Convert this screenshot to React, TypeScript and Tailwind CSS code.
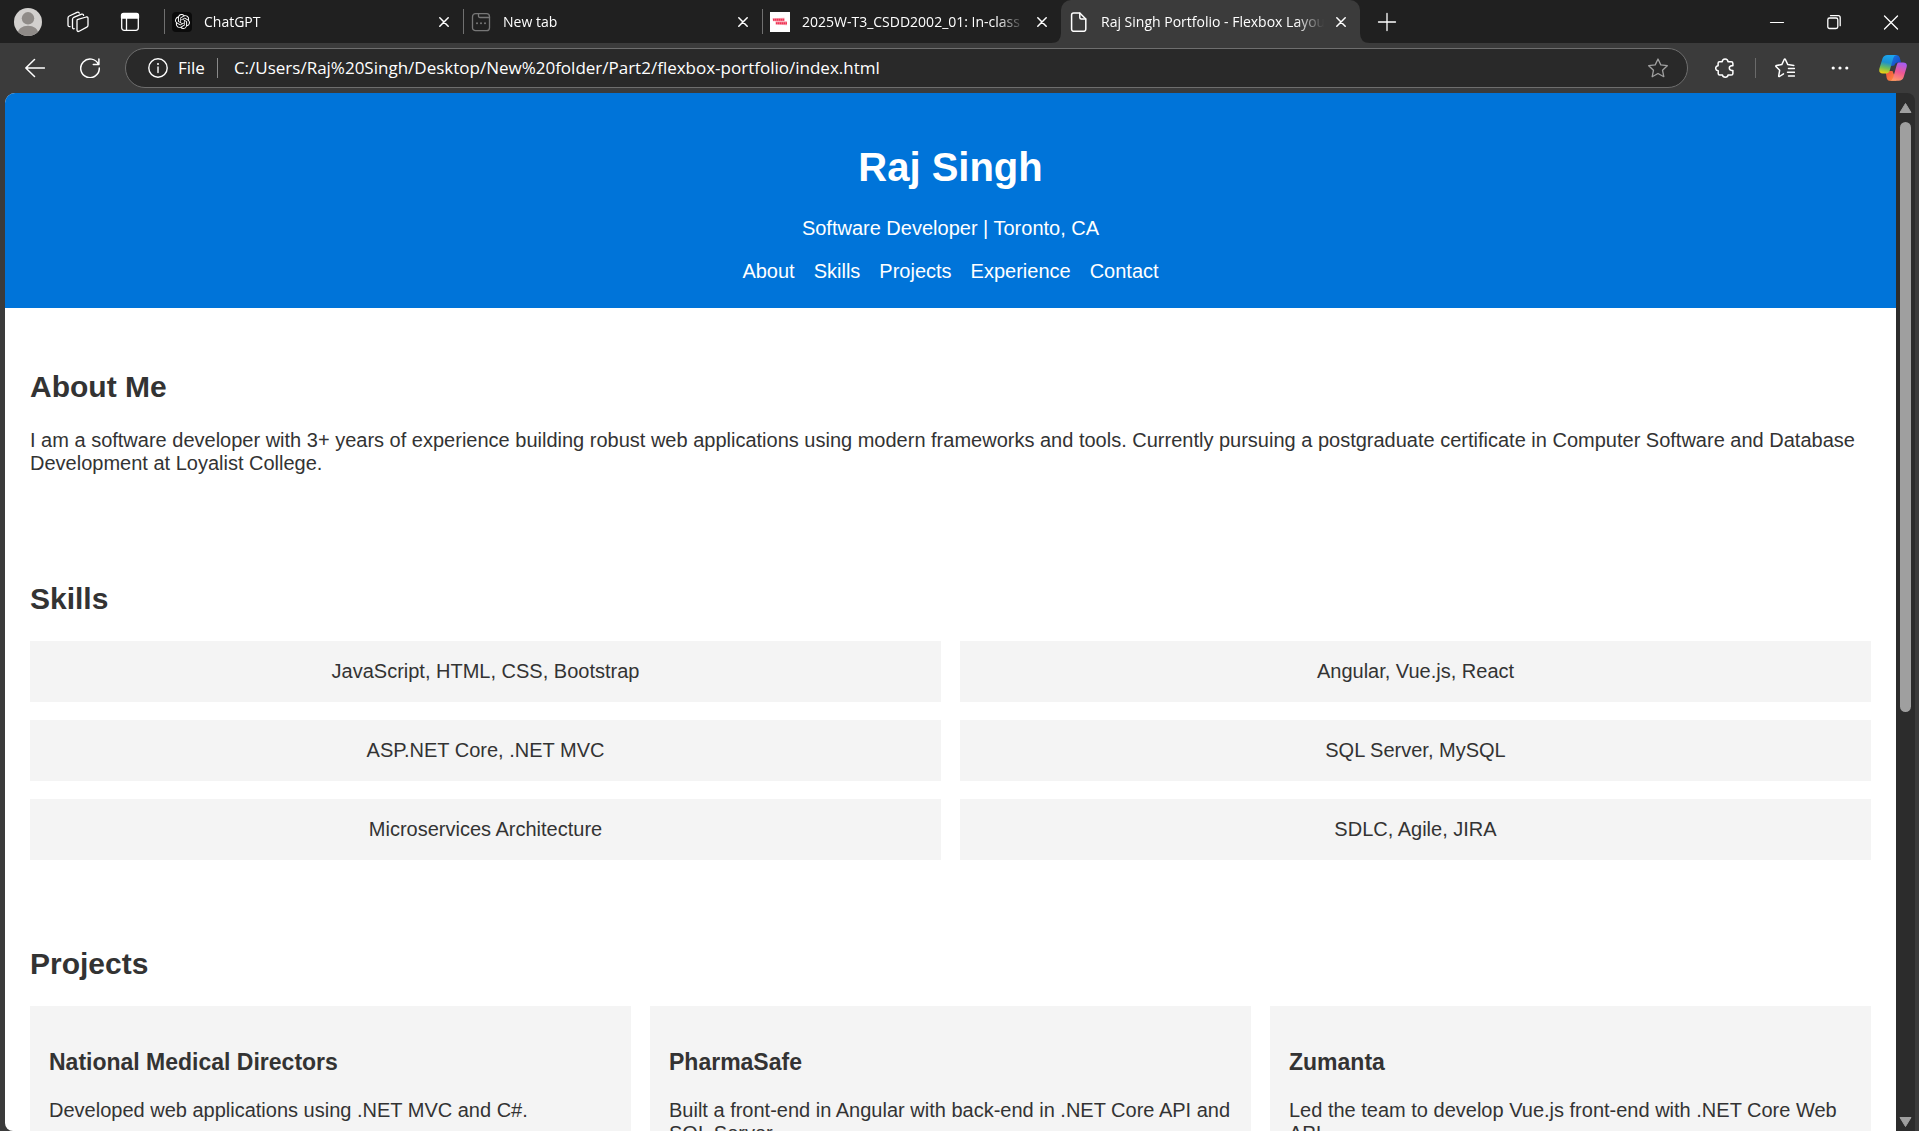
import type { ReactNode } from "react";
import { SiOpenai } from "react-icons/si";

const skills = [
  "JavaScript, HTML, CSS, Bootstrap",
  "Angular, Vue.js, React",
  "ASP.NET Core, .NET MVC",
  "SQL Server, MySQL",
  "Microservices Architecture",
  "SDLC, Agile, JIRA",
];

const projects = [
  { name: "National Medical Directors", text: "Developed web applications using .NET MVC and C#." },
  { name: "PharmaSafe", text: "Built a front-end in Angular with back-end in .NET Core API and SQL Server." },
  { name: "Zumanta", text: "Led the team to develop Vue.js front-end with .NET Core Web API." },
];

const links = ["About", "Skills", "Projects", "Experience", "Contact"];

function Line({ size = 20, width = 1.3, className = "", children }: { size?: number; width?: number; className?: string; children: ReactNode }) {
  return (
    <svg
      width={size}
      height={size}
      viewBox={`0 0 ${size} ${size}`}
      fill="none"
      stroke="currentColor"
      strokeWidth={width}
      strokeLinecap="round"
      strokeLinejoin="round"
      className={`shrink-0 ${className}`}
      aria-hidden="true"
    >
      {children}
    </svg>
  );
}

function Avatar() {
  return (
    <svg width="28" height="28" viewBox="0 0 28 28" aria-hidden="true">
      <defs>
        <clipPath id="avatar-clip">
          <circle cx="14" cy="14" r="14" />
        </clipPath>
      </defs>
      <g clipPath="url(#avatar-clip)">
        <rect width="28" height="28" fill="#d2d0ce" />
        <circle cx="14" cy="10.3" r="6.2" fill="#8f8b88" />
        <ellipse cx="14" cy="25.5" rx="10.5" ry="7.7" fill="#8f8b88" />
      </g>
    </svg>
  );
}

function Workspaces() {
  return (
    <Line size={22}>
      <path d="M10.2 8.7 19.2 6q1.8-.4 1.8 1.3v6.900q0 1.300-1.200 1.900l-7.600 4.100q-1.900.9-2.200-1V10.500q0-1.300.2-1.800z" />
      <path d="M7.200 17.700q-1.700.5-1.700-1.400V8.500q0-1.500 1.300-2.200L14.600 3.200q1.600-.5 2 1.200" />
      <path d="M3 15.600q-2 .2-2-1.700V7q0-1.400 1.300-2L10 1.300q1.600-.6 2.200.8" />
    </Line>
  );
}

function TabActions() {
  return (
    <Line>
      <rect x="1.700" y="1.700" width="16.600" height="16.600" rx="2.500" />
      <path d="M1.500 3.500q0-2 2-2h13q2 0 2 2V6h-17z" fill="currentColor" />
      <path d="M6.500 6v12" />
    </Line>
  );
}

function LoyalistIcon() {
  return (
    <svg width="20" height="20" viewBox="0 0 20 20" aria-hidden="true">
      <rect width="20" height="20" fill="#fff" />
      <path d="M2.500 6.300 14.500 5.800v3.400L3 9.300z" fill="#f9a3b0" />
      <path d="M5.500 9.300 17 9.200v4.100l-11.500-.9z" fill="#f9a3b0" />
      <path d="M3 7.700h11.200M6 11.200h11" stroke="#ee3355" strokeWidth="2" strokeDasharray="1.600 .4" />
    </svg>
  );
}

function NewTabIcon() {
  return (
    <Line className="text-[#777777]">
      <rect x="1.500" y="1.700" width="17" height="17" rx="3" />
      <path d="M7.500 2v2q0 1.500 1.500 1.500h9.500" />
      <path d="M6 11.300h.01M10 11.300h.01M14 11.300h.01" strokeWidth="2" />
    </Line>
  );
}

function FileIcon() {
  return (
    <Line width={1.5}>
      <path d="M4.600 1h6.200l6 6v10.300q0 2-2 2H4.600q-2 0-2-2V3q0-2 2-2z" />
      <path d="M10.800 1.200v4.300q0 1.500 1.500 1.500h4.300" />
    </Line>
  );
}

function Copilot() {
  return (
    <svg width="28" height="26" viewBox="0 0 28 26" aria-hidden="true">
      <defs>
        <linearGradient id="cp-left" x1="0.500" y1="0" x2="0.300" y2="1">
          <stop offset="0" stopColor="#1ba5ee" />
          <stop offset=".4" stopColor="#1c90cf" />
          <stop offset=".7" stopColor="#6ebd58" />
          <stop offset="1" stopColor="#f0d010" />
        </linearGradient>
        <linearGradient id="cp-right" x1="0.600" y1="0" x2="0.300" y2="1">
          <stop offset="0" stopColor="#a75cf0" />
          <stop offset=".5" stopColor="#ee5792" />
          <stop offset="1" stopColor="#ff9a69" />
        </linearGradient>
        <linearGradient id="cp-top" x1="0" y1="0" x2="1" y2="1">
          <stop offset="0" stopColor="#1b7ce0" />
          <stop offset="1" stopColor="#153fc4" />
        </linearGradient>
        <linearGradient id="cp-bottom" x1="0" y1="0" x2="1" y2="1">
          <stop offset="0" stopColor="#ef4a3d" />
          <stop offset="1" stopColor="#ff9440" />
        </linearGradient>
      </defs>
      <path d="M11 0h6.500q2.500 0 3.300 2.800L22 7.500h-3q-2.800 0-3.700 3L12 11z" fill="url(#cp-top)" />
      <path d="M6.500 16h7l4 9.800h-6.300q-2.700 0-3.500-2.900z" fill="url(#cp-bottom)" />
      <path d="M8.500 0h9q-2.500.5-3.300 3.300l-3.400 11.900q-.9 3.200-3.800 3.200H3.700Q-.600 18.400.400 13.600L3.500 3.500Q4.700 0 8.500 0z" fill="url(#cp-left)" />
      <path d="M19.500 7.500h4.600q4.700 0 3.500 4.800L24.700 22q-1.200 3.800-5 3.800h-9q2.700-.3 3.500-3.200l3.400-12q.7-3.100 1.900-3.100z" fill="url(#cp-right)" />
    </svg>
  );
}

function CloseX() {
  return (
    <Line size={10} width={1.500}>
      <path d="m.8.800 8.400 8.400M9.200.800.800 9.200" />
    </Line>
  );
}

function Tab({ icon, title, active = false }: { icon: ReactNode; title: string; active?: boolean }) {
  return (
    <div
      role="tab"
      aria-selected={active}
      className={
        active
          ? "relative flex w-[299px] items-center self-stretch rounded-t-[10px] bg-[#3b3b3b] pr-[9px] pl-2"
          : "relative flex w-[299px] items-center self-stretch pr-[9px] pl-2"
      }
    >
      {active ? (
        <>
          <svg width="10" height="10" viewBox="0 0 10 10" className="absolute bottom-0 -left-[10px]" aria-hidden="true">
            <path d="M10 0v10H0Q10 10 10 0z" fill="#3b3b3b" />
          </svg>
          <svg width="10" height="10" viewBox="0 0 10 10" className="absolute -right-[10px] bottom-0" aria-hidden="true">
            <path d="M0 0v10h10Q0 10 0 0z" fill="#3b3b3b" />
          </svg>
        </>
      ) : (
        <span className="absolute top-[9px] left-0 h-[25px] w-px bg-[#707070]" />
      )}
      <button type="button" className="flex min-w-0 flex-1 items-center gap-3 text-left">
        <span className="flex size-5 shrink-0 items-center justify-center">{icon}</span>
        <span className="min-w-0 flex-1 overflow-hidden text-[14px] leading-5 whitespace-nowrap [mask-image:linear-gradient(to_right,#000_calc(100%-28px),transparent)]">
          {title}
        </span>
      </button>
      <button type="button" aria-label="Close tab" className="ml-[7px] flex size-5 items-center justify-center">
        <CloseX />
      </button>
    </div>
  );
}

function TabBar() {
  return (
    <div className="flex h-[43px] shrink-0 items-center bg-[#202020]">
      <div className="flex w-[164px] shrink-0 items-center pl-[14px]">
        <button type="button" aria-label="Profile">
          <Avatar />
        </button>
        <button type="button" aria-label="Workspaces" className="ml-[25px]">
          <Workspaces />
        </button>
        <button type="button" aria-label="Tab actions" className="ml-[31px]">
          <TabActions />
        </button>
      </div>
      <div role="tablist" className="flex self-stretch">
        <Tab
          title="ChatGPT"
          icon={
            <span className="flex size-5 items-center justify-center rounded-sm bg-[#0b0b0b]">
              <SiOpenai size={15} />
            </span>
          }
        />
        <Tab title="New tab" icon={<NewTabIcon />} />
        <Tab title="2025W-T3_CSDD2002_01: In-class" icon={<LoyalistIcon />} />
        <Tab title="Raj Singh Portfolio - Flexbox Layout" icon={<FileIcon />} active />
      </div>
      <button type="button" aria-label="New tab" className="ml-[17px]">
        <Line>
          <path d="M10 1.500v17M1.500 10h17" />
        </Line>
      </button>
      <div className="ml-auto flex items-center gap-[37px] pr-[18px]">
        <button type="button" aria-label="Minimize">
          <Line width={1.200}>
            <path d="M3.500 10.500h13" />
          </Line>
        </button>
        <button type="button" aria-label="Restore">
          <Line>
            <rect x="3.800" y="6" width="10" height="10.500" rx="1.800" />
            <path d="M6.500 3.700h7.700q2 0 2 2v8" />
          </Line>
        </button>
        <button type="button" aria-label="Close">
          <Line>
            <path d="m3.500 4 13 13M16.500 4l-13 13" />
          </Line>
        </button>
      </div>
    </div>
  );
}

function Toolbar() {
  return (
    <div className="flex h-[50px] shrink-0 items-center bg-[#3b3b3b] pr-3 pl-[25px]">
      <button type="button" aria-label="Back">
        <Line width={1.500}>
          <path d="M19.500 10H.800M9.500 1.500.800 10l8.700 8.500" />
        </Line>
      </button>
      <button type="button" aria-label="Refresh" className="ml-[35px]">
        <Line width={1.500}>
          <path d="M18.500 6.500A9.300 9.300 0 1 0 19.300 10M18.900 1v5.600h-5.600" />
        </Line>
      </button>
      <div className="ml-[25px] flex h-10 flex-1 items-center rounded-full border border-[#6e6e6e] bg-[#292929] pr-[19px] pl-[22px]">
        <button type="button" className="flex items-center gap-[10px] text-[17px] leading-6">
          <Line width={1.400}>
            <circle cx="10" cy="10" r="9.200" />
            <path d="M10 9v5.500" />
            <path d="M10 6v.100" strokeWidth="2" />
          </Line>
          File
        </button>
        <span className="ml-3 h-5 w-px bg-[#8a8a8a]" />
        <input
          aria-label="Address"
          defaultValue="C:/Users/Raj%20Singh/Desktop/New%20folder/Part2/flexbox-portfolio/index.html"
          className="ml-4 min-w-0 flex-1 bg-transparent text-[17px] leading-6 outline-none"
        />
        <button type="button" aria-label="Add to favorites" className="text-[#a0a0a0]">
          <Line>
            <path d="m10 1 2.800 5.900 6.500.8-4.800 4.500 1.300 6.500L10 15.500l-5.800 3.200 1.300-6.500L.700 7.700l6.500-.8z" />
          </Line>
        </button>
      </div>
      <button type="button" aria-label="Extensions" className="ml-[27px]">
        <Line width={1.500}>
          <path d="M4.500 3.800h2.700q.2-2.900 2.900-2.900t2.900 2.900h3.200q1.700 0 1.700 1.700v2.300h-1.200q-2.400.2-2.400 2.300t2.400 2.300h1.200v3q0 1.700-1.700 1.700h-3.200q-.2 2.100-2.700 2.100t-2.800-2.100H4.700q-1.500 0-1.500-1.500v-2.900Q.700 12.400.700 10.200t2.400-2.400V5.300q0-1.500 1.400-1.500z" />
        </Line>
      </button>
      <span className="ml-5 h-5 w-px bg-[#6a6a6a]" />
      <button type="button" aria-label="Favorites" className="ml-[19px]">
        <Line width={1.500}>
          <path d="M8.500 15.800 4.500 18.500q-.9.400-.8-.7l1-5.600L.900 8.500Q.500 7.600 1.500 7.400l5.300-.8L9.200 1.500q.6-1 1.200 0L12.800 6.600l6 .8" />
          <path d="M13.500 10.500h6M12.500 14.300h7M13.500 18h6" />
        </Line>
      </button>
      <button type="button" aria-label="Settings and more" className="ml-[35px]">
        <svg width="20" height="20" viewBox="0 0 20 20" fill="currentColor" aria-hidden="true">
          <circle cx="3.200" cy="10" r="1.600" />
          <circle cx="10" cy="10" r="1.600" />
          <circle cx="16.800" cy="10" r="1.600" />
        </svg>
      </button>
      <button type="button" aria-label="Copilot" className="ml-[29px]">
        <Copilot />
      </button>
    </div>
  );
}

function Scrollbar() {
  return (
    <div className="flex w-[19px] shrink-0 flex-col items-center rounded-tr-lg bg-[#2c2c2c] pt-[9px] pb-[3px]" aria-hidden="true">
      <svg width="13" height="12" viewBox="0 0 13 12" className="shrink-0">
        <path d="M6.500 1.500 12 10.500H1z" fill="#9f9f9f" stroke="#9f9f9f" strokeLinejoin="round" />
      </svg>
      <div className="mt-2 flex min-h-0 w-[11px] flex-1 flex-col">
        <div className="h-[59.4%] rounded-full bg-[#9f9f9f]" />
      </div>
      <svg width="13" height="12" viewBox="0 0 13 12" className="shrink-0">
        <path d="M6.500 10.500 12 1.500H1z" fill="#9f9f9f" stroke="#9f9f9f" strokeLinejoin="round" />
      </svg>
    </div>
  );
}

function Section({ title, children }: { title: string; children: ReactNode }) {
  return (
    <section id={title.split(" ")[0].toLowerCase()} className="px-[25px] pt-[62px] pb-[25px]">
      <h2 className="mb-[25px] text-[30px] leading-[34px] font-bold">{title}</h2>
      {children}
    </section>
  );
}

function Portfolio() {
  return (
    <main className='min-w-0 flex-1 overflow-hidden rounded-tl-[10px] rounded-bl-lg bg-white font-["Liberation_Sans",Arial,sans-serif] text-[20px] leading-[23px] text-[#333333]'>
      <header className="bg-[#0074d9] px-[25px] pt-[51px] pb-[25px] text-center text-white">
        <h1 className="text-[40px] leading-[46px] font-bold">Raj Singh</h1>
        <p className="mt-[27px]">Software Developer | Toronto, CA</p>
        <nav className="mt-5 flex justify-center gap-[19px]">
          {links.map((link) => (
            <a key={link} href={`#${link.toLowerCase()}`}>
              {link}
            </a>
          ))}
        </nav>
      </header>
      <Section title="About Me">
        <p className="mb-5">
          I am a software developer with 3+ years of experience building robust web applications using modern frameworks
          and tools. Currently pursuing a postgraduate certificate in Computer Software and Database Development at
          Loyalist College.
        </p>
      </Section>
      <Section title="Skills">
        <ul className="grid grid-cols-2 gap-x-[19px] gap-y-[18px] text-center">
          {skills.map((skill) => (
            <li key={skill} className="bg-[#f4f4f4] p-[19px]">
              {skill}
            </li>
          ))}
        </ul>
      </Section>
      <Section title="Projects">
        <div className="grid grid-cols-3 gap-[19px]">
          {projects.map((project) => (
            <article key={project.name} className="bg-[#f4f4f4] px-[19px] pt-[43px] pb-[39px]">
              <h3 className="mb-[23px] text-[23px] leading-[27px] font-bold">{project.name}</h3>
              <p>{project.text}</p>
            </article>
          ))}
        </div>
      </Section>
    </main>
  );
}

export default function App() {
  return (
    <div className='flex h-screen flex-col overflow-hidden bg-[#3b3b3b] font-["Open_Sans","Noto_Sans",sans-serif] text-white'>
      <TabBar />
      <Toolbar />
      <div className="flex min-h-0 flex-1 pr-1 pl-[5px]">
        <Portfolio />
        <Scrollbar />
      </div>
    </div>
  );
}
